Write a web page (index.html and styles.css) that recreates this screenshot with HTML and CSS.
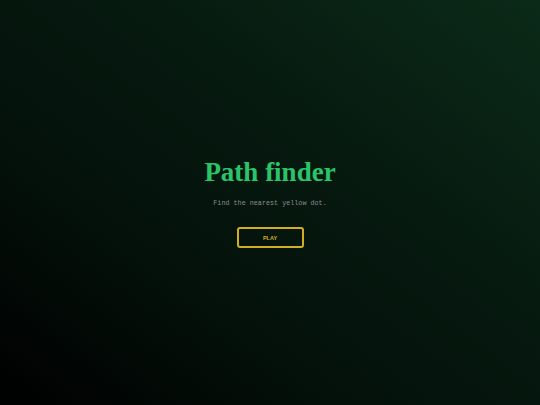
FILE: index.html
```html
<!DOCTYPE html>
<html>
<head>
<meta charset="utf-8">
<link rel="stylesheet" href="styles.css">
</head>
<body>
<main class="screen">
  <h1 class="title">Path finder</h1>
  <p class="subtitle">Find the nearest yellow dot.</p>
  <button class="play">PLAY</button>
</main>
</body>
</html>
```

FILE: styles.css
```css
html, body {
  margin: 0;
  padding: 0;
  height: 100%;
}
body {
  background: linear-gradient(to top right, #000000 0%, #04120b 35%, #06190f 60%, #0b2a18 100%);
}
.screen {
  height: 100%;
  display: flex;
  flex-direction: column;
  align-items: center;
  justify-content: center;
}
.title {
  margin: 0;
  font-family: "Liberation Serif", serif;
  font-weight: bold;
  font-size: 27px;
  line-height: 31px;
  color: #2bc46b;
}
.subtitle {
  margin: 11px 0 0;
  font-family: "Liberation Mono", monospace;
  font-size: 6.75px;
  line-height: 8px;
  color: #8c8c8c;
}
.play {
  margin-top: 20px;
  width: 67px;
  height: 21px;
  background: transparent;
  border: 2px solid #d1ae22;
  border-radius: 3px;
  color: #cfae2c;
  font-family: "Liberation Sans", sans-serif;
  font-weight: bold;
  font-size: 5.5px;
  padding: 0;
}
```
